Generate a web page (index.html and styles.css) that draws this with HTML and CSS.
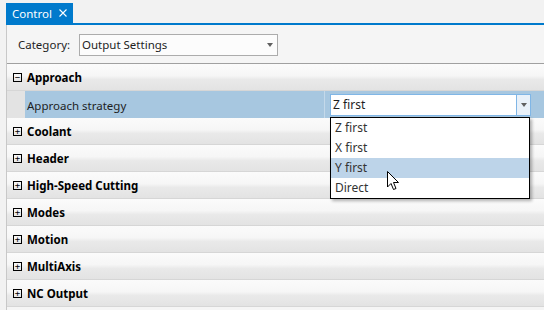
FILE: index.html
```html
<!DOCTYPE html>
<html lang="en">
<head>
    <meta charset="UTF-8">
    <title>Control</title>
    <link rel="stylesheet" href="styles.css">
</head>
<body>
    <div class="tabbar">
        <div class="tab">
            Control
            <svg class="tab-close" width="8" height="8" viewBox="0 0 8 8">
                <path d="M0.5 0.5 L7.5 7.5 M7.5 0.5 L0.5 7.5" stroke="#fff" stroke-width="1.1"/>
            </svg>
        </div>
    </div>
    <div class="tab-line"></div>

    <div class="panel">
        <!-- Category selector -->
        <div class="category">
            <span class="category-label">Category:</span>
            <div class="combo">
                <span>Output Settings</span>
                <span class="combo-arrow"></span>
            </div>
        </div>

        <!-- Property grid -->
        <div class="grid">
            <div class="group"><span class="toggle">&minus;</span>Approach</div>
            <div class="prop selected">
                <div class="gutter"></div>
                <div class="prop-name">Approach strategy</div>
                <div class="prop-value">
                    <div class="edit-combo">
                        <span class="edit-text">Z first</span>
                        <span class="edit-button"><span class="combo-arrow"></span></span>
                    </div>
                    <div class="dropdown">
                        <div class="option">Z first</div>
                        <div class="option">X first</div>
                        <div class="option hover">Y first</div>
                        <div class="option">Direct</div>
                    </div>
                    <svg class="cursor" width="13" height="20" viewBox="0 0 13 20">
                        <path d="M0.5 0.5 L0.5 16 L4 12.5 L6.5 18.5 L9 17.5 L6.5 11.5 L11.5 11.5 Z" fill="#fff" stroke="#000" stroke-width="1"/>
                    </svg>
                </div>
            </div>
            <div class="group"><span class="toggle">+</span>Coolant</div>
            <div class="group"><span class="toggle">+</span>Header</div>
            <div class="group"><span class="toggle">+</span>High-Speed Cutting</div>
            <div class="group"><span class="toggle">+</span>Modes</div>
            <div class="group"><span class="toggle">+</span>Motion</div>
            <div class="group"><span class="toggle">+</span>MultiAxis</div>
            <div class="group"><span class="toggle">+</span>NC Output</div>
        </div>
    </div>
</body>
</html>
```

FILE: styles.css
```css
* {
    box-sizing: border-box;
    margin: 0;
    padding: 0;
}

body {
    font-family: 'Noto Sans', sans-serif;
    font-size: 11.5px;
    color: #1e1e1e;
    background-color: #f2f2f2;
    height: 310px;
    overflow: hidden;
}

.tabbar {
    height: 23px;
    padding-left: 6px;
    display: flex;
    align-items: flex-end;
}

.tab {
    height: 20px;
    width: 67px;
    background-color: #007acc;
    color: #fff;
    padding-left: 6px;
    font-size: 11.5px;
    display: flex;
    align-items: center;
}

.tab-close {
    margin-left: 7px;
}

.tab-line {
    height: 2px;
    margin-left: 6px;
    background-color: #007acc;
}

.panel {
    margin-left: 6px;
    border-left: 1px solid #c8c8c8;
    background-color: #f5f5f5;
    height: 285px;
}

.category {
    height: 39px;
    display: flex;
    align-items: center;
    padding-left: 11px;
    padding-top: 1px;
    border-bottom: 1px solid #a0a0a0;
}

.category-label {
    width: 61px;
}

.combo {
    width: 199px;
    height: 22px;
    border: 1px solid #acacac;
    background-color: #fcfcfc;
    display: flex;
    align-items: center;
    justify-content: space-between;
    padding: 0 4px 0 2px;
}

.combo-arrow {
    width: 0;
    height: 0;
    border-left: 3px solid transparent;
    border-right: 3px solid transparent;
    border-top: 4px solid #606060;
}

.group {
    height: 27px;
    display: flex;
    align-items: center;
    padding-left: 6px;
    padding-top: 1px;
    font-weight: bold;
    color: #000;
    background: linear-gradient(#fbfbfb, #f6f6f6 45%, #e9e9e9 60%, #e3e3e3);
    border-bottom: 1px solid #d6d6d6;
}

.toggle {
    width: 9px;
    height: 9px;
    border: 1px solid #000;
    margin-right: 5px;
    font-size: 9px;
    line-height: 6px;
    text-align: center;
    font-weight: normal;
    font-family: 'DejaVu Sans Mono', monospace;
}

.prop {
    height: 27px;
    display: flex;
    background-color: #a7c7e0;
}

.gutter {
    width: 18px;
    background-color: #e3e3e3;
}

.prop-name {
    width: 300px;
    padding-left: 2px;
    padding-top: 1px;
    display: flex;
    align-items: center;
    border-right: 1px solid #c4d9ea;
}

.prop-value {
    position: relative;
    flex: 1;
    padding: 3px 13px 0 5px;
}

.edit-combo {
    height: 22px;
    display: flex;
    background-color: #fff;
    border: 1px solid #80b6e6;
}

.edit-text {
    flex: 1;
    padding-left: 2px;
    line-height: 20px;
    font-size: 12px;
}

.edit-button {
    width: 14px;
    display: flex;
    align-items: center;
    justify-content: center;
    border-left: 1px solid #80b6e6;
    background-color: #e9f1f9;
}

.dropdown {
    position: absolute;
    top: 26px;
    left: 5px;
    width: 200px;
    background-color: #fff;
    border: 1px solid #000;
    box-shadow: 2px 2px 3px rgba(0, 0, 0, 0.3);
    z-index: 2;
}

.option {
    height: 20px;
    line-height: 20px;
    padding-left: 4px;
    color: #333;
    font-size: 12px;
}

.option.hover {
    background-color: #bdd4e9;
}

.cursor {
    position: absolute;
    top: 80px;
    left: 62px;
    z-index: 3;
}
```
